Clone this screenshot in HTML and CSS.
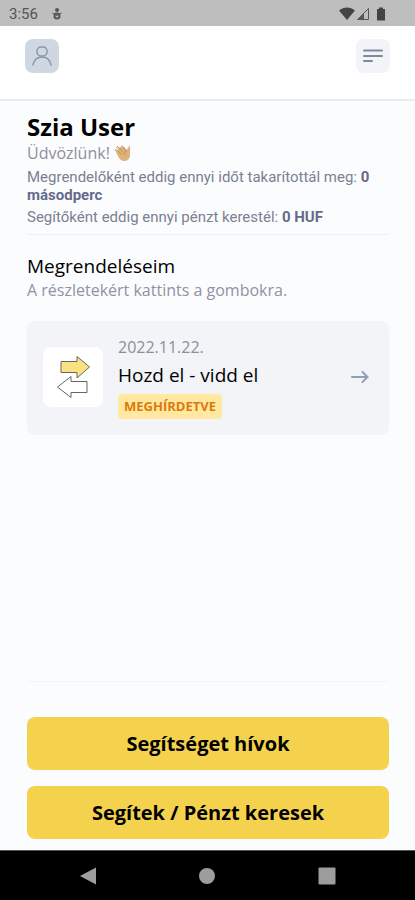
FILE: index.html
```html
<!DOCTYPE html>
<html lang="hu">
<head>
<meta charset="utf-8">
<meta name="viewport" content="width=device-width, initial-scale=1">
<title>Megrendeléseim</title>
<link rel="stylesheet" href="styles.css">
</head>
<body>
<div class="statusbar">
  <span>3:56</span>
  <svg class="status-left" width="12" height="14" viewBox="0 0 12 14" aria-hidden="true"><circle cx="6" cy="3" r="2" fill="#555"/><circle cx="6" cy="9" r="2.500" fill="none" stroke="#555" stroke-width="2"/><path d="M1.500 6L6 8.500 10.500 6" fill="none" stroke="#555"/></svg>
  <svg class="status-right" width="48" height="14" viewBox="0 0 48 14" aria-hidden="true"><path d="M0 3.500C5-.5 11-.5 16 3.500L8 13z" fill="#444"/><path d="M29.500 1.500v11h-11z" fill="none" stroke="#555"/><path d="M25 6.500v6h-6z" fill="#555"/><path d="M38 2h2V.5h4V2h2v11.500h-8z" fill="#444"/></svg>
</div>
<header class="topbar">
  <button class="icon-button profile" aria-label="Profil"><svg width="20" height="20" viewBox="0 0 20 20"><rect x="5" y="1" width="10" height="9" rx="4"/><path d="M1 19c1-5 4-8 9-8s8 3 9 8"/></svg></button>
  <button class="icon-button menu" aria-label="Menü"><svg width="20" height="16" viewBox="0 0 20 16"><path d="M1 2.500h18M1 8h18M1 13h8"/></svg></button>
</header>
<main class="content">
  <section class="welcome">
    <h1>Szia User</h1>
    <p class="greeting">Üdvözlünk!
      <svg width="18" height="18" viewBox="0 0 18 18" aria-hidden="true"><path d="M2 4l2-2M1 7l1-2M15 2l1 3" fill="none" stroke="#a9adb8"/><path d="M2 8c-1-2 .5-3 2-1.500L3.500 4.500C3 3 4.500 2 5.500 3.500L7 3c0-1.500 2-2 2.500-.5L13 6l.5-1.500c.5-1.500 2.500-1 2.500.5v6c0 4-3 6-6 6-2 0-3.500-1-5-3z" fill="#dfb27c"/><path d="M3.500 6.500l4 4M5.500 4l4 5M9.500 3l3 5M13 7c-2 1-2.500 2-2 4" fill="none" stroke="#c4935f"/></svg>
    </p>
    <p class="stat">Megrendelőként eddig ennyi időt takarítottál meg: <b>0</b> <b>másodperc</b></p>
    <p class="stat">Segítőként eddig ennyi pénzt kerestél: <b>0</b> <b>HUF</b></p>
  </section>
  <section class="orders">
    <h2>Megrendeléseim</h2>
    <p class="hint">A részletekért kattints a gombokra.</p>
    <a class="order" href="#order">
      <span class="thumb"><svg width="36" height="44" viewBox="0 0 36 44" aria-hidden="true"><path d="M6 6.500h16V1.500L34.500 12 22 23v-5.500H6z" fill="#fae184"/><path d="M32 26.500H16V21.500L2.500 32 16 42.500v-5H32z" fill="#fff"/></svg></span>
      <span class="details">
        <span class="date">2022.11.22.</span>
        <span class="name">Hozd el - vidd el</span>
        <span class="badge">MEGHÍRDETVE</span>
      </span>
      <svg class="arrow" width="18" height="12" viewBox="0 0 18 12" aria-hidden="true"><path d="M1 6h15.500M11.500 1l5 5-5 5"/></svg>
    </a>
  </section>
  <section class="actions">
    <button class="primary">Segítséget hívok</button>
    <button class="primary">Segítek / Pénzt keresek</button>
  </section>
</main>
<nav class="navbar" aria-label="Rendszer">
  <button aria-label="Vissza"><svg width="18" height="18" viewBox="0 0 18 18"><path d="M17 .5v17L1 9z"/></svg></button>
  <button aria-label="Kezdőlap"><svg width="18" height="18" viewBox="0 0 18 18"><circle cx="9" cy="9" r="8"/></svg></button>
  <button aria-label="Áttekintés"><svg width="18" height="18" viewBox="0 0 18 18"><rect x=".5" y=".5" width="17" height="17" rx="1"/></svg></button>
</nav>
</body>
</html>
```
FILE: styles.css
```css
* { box-sizing: border-box; }
body {
  margin: 0;
  min-height: 100vh;
  display: flex;
  flex-direction: column;
  background: #fbfcfe;
  color: #000;
  font-family: "Open Sans", sans-serif;
}
h1, h2, p { margin: 0; }
button { border: 0; padding: 0; font: inherit; cursor: pointer; }
svg { display: block; flex: none; }

.statusbar {
  height: 26px;
  padding: 2px 28px 0 9px;
  display: flex;
  align-items: center;
  background: #bebebe;
  color: #555;
  font: 15px/24px Roboto, sans-serif;
}
.status-left { margin-left: 13px; }
.status-right { margin-left: auto; }

.topbar {
  height: 75px;
  padding: 13px 25px 0;
  display: flex;
  justify-content: space-between;
  background: #fff;
  border-bottom: 2px solid #ebecef;
}
.icon-button {
  width: 34px;
  height: 34px;
  border-radius: 8px;
  display: grid;
  place-items: center;
}
.icon-button svg { fill: none; stroke-linecap: round; }
.profile { background: #cfd8e1; }
.profile svg { stroke: #8995ae; stroke-width: 1.5; }
.menu { background: #f2f4f8; }
.menu svg { stroke: #7d89a1; stroke-width: 2; }

.content {
  flex: 1;
  display: flex;
  flex-direction: column;
  padding: 11px 26px 11px 27px;
}
.welcome {
  padding-bottom: 8px;
  border-bottom: 1px solid #eff1f4;
}
h1 { font-size: 24px; line-height: 30px; font-weight: 700; }
.greeting {
  display: flex;
  align-items: center;
  gap: 4px;
  color: #8b8f9b;
  font-size: 16px;
  line-height: 22px;
}
.stat {
  margin-top: 4px;
  color: #7b8091;
  font: 15px/18px Roboto, sans-serif;
}
.stat b { color: #656a8c; font-weight: 700; }

.orders { padding-top: 18px; }
h2 { font-size: 19px; line-height: 26px; font-weight: 400; }
.hint { color: #8e94a3; font-size: 16px; line-height: 22px; }
.order {
  margin-top: 20px;
  padding: 14px 20px 16px 16px;
  display: flex;
  align-items: center;
  border-radius: 8px;
  background: #f2f4f8;
  color: inherit;
  text-decoration: none;
}
.thumb {
  width: 60px;
  height: 60px;
  border-radius: 8px;
  display: grid;
  place-items: center;
  background: #fff;
}
.thumb svg { stroke: #666; stroke-width: 1; }
.details {
  margin-left: 15px;
  display: flex;
  flex-direction: column;
  align-items: flex-start;
}
.date { color: #8b8f9b; font-size: 16px; line-height: 24px; }
.name { font-size: 19px; line-height: 32px; }
.badge {
  margin-top: 3px;
  padding: 0 6px;
  border-radius: 4px;
  background: #ffe9a0;
  color: #dd7a0c;
  font-size: 13px;
  line-height: 25px;
  font-weight: 700;
}
.arrow {
  margin-left: auto;
  fill: none;
  stroke: #929fb3;
  stroke-width: 2;
  stroke-linecap: round;
}

.actions {
  margin-top: auto;
  padding-top: 35px;
  display: grid;
  gap: 16px;
  border-top: 1px solid #f1f3f6;
}
.primary {
  height: 53px;
  border-radius: 8px;
  background: #f5d24e;
  color: #000;
  font-size: 20px;
  font-weight: 700;
}

.navbar {
  height: 50px;
  padding: 0 28px;
  display: grid;
  grid-template-columns: repeat(3, 1fr);
  background: #000;
  border-top: 1px solid #555;
}
.navbar button { display: grid; place-items: center; background: none; }
.navbar svg { fill: #9d9d9d; }
```
